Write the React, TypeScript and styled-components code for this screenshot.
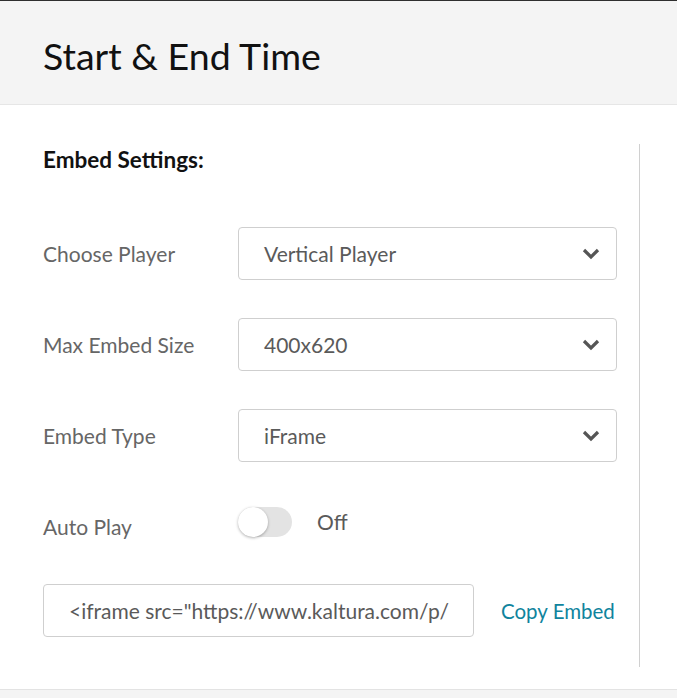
import React from "react";
import styled, { createGlobalStyle } from "styled-components";

const Global = createGlobalStyle`
  html, body { margin: 0; padding: 0; background: #f4f4f4; }
  body { font-family: Lato, "Open Sans", sans-serif; }
  * { box-sizing: border-box; }
`;

const Page = styled.div`
  width: 677px;
  height: 698px;
  display: flex;
  flex-direction: column;
  border-top: 1px solid #2f2f2f;
  background: #f4f4f4;
  overflow: hidden;
`;

const Header = styled.header`
  height: 104px;
  flex-shrink: 0;
  display: flex;
  align-items: center;
  padding: 5px 43px 0;
  border-bottom: 1px solid #e6e6e6;
`;

const Title = styled.h1`
  margin: 0;
  font-family: "Source Sans Pro", Lato, sans-serif;
  font-weight: 400;
  font-size: 37.5px;
  color: #111;
`;

const Body = styled.main`
  height: 585px;
  flex-shrink: 0;
  background: #fff;
  border-bottom: 1px solid #e3e3e3;
  display: flex;
  padding: 0 0 0 43px;
`;

const Content = styled.section`
  width: 574px;
  flex-shrink: 0;
  padding-top: 44px;
  display: flex;
  flex-direction: column;
`;

const Divider = styled.div`
  width: 1px;
  background: #d0d0d0;
  margin: 39px 0 22px 22px;
`;

const SectionTitle = styled.h2`
  margin: 0 0 56px;
  font-size: 22.5px;
  line-height: 22px;
  font-weight: 700;
  color: #111;
`;

const Row = styled.div<{ $gap?: number }>`
  display: flex;
  align-items: center;
  height: 53px;
  margin-bottom: ${(p) => p.$gap ?? 38}px;
`;

const Label = styled.label`
  width: 195px;
  flex-shrink: 0;
  font-size: 21px;
  color: #666;
`;

const SelectBox = styled.div`
  width: 379px;
  height: 53px;
  border: 1px solid #cfcfcf;
  border-radius: 4px;
  display: flex;
  align-items: center;
  justify-content: space-between;
  padding: 0 16px 0 25px;
  font-size: 21px;
  color: #5a5a5a;
`;

const ToggleWrap = styled.div`
  display: flex;
  align-items: center;
  gap: 25px;
  margin-top: -10px;
`;

const Track = styled.div`
  width: 54px;
  height: 30px;
  border-radius: 15px;
  background: #e3e3e3;
  position: relative;
`;

const Knob = styled.div`
  position: absolute;
  left: 0;
  top: 0;
  width: 30px;
  height: 30px;
  border-radius: 50%;
  background: #fff;
  box-shadow: 0 1px 3px rgba(0, 0, 0, 0.3);
`;

const ToggleText = styled.span`
  font-size: 21px;
  color: #5a5a5a;
`;

const EmbedRow = styled.div`
  display: flex;
  align-items: center;
  height: 53px;
  margin-top: 1px;
`;

const EmbedInput = styled.div`
  width: 431px;
  flex-shrink: 0;
  height: 53px;
  border: 1px solid #cfcfcf;
  border-radius: 4px;
  display: flex;
  align-items: center;
  padding: 0 24px 0 25px;
  font-size: 21px;
  color: #5a5a5a;
`;

const EmbedText = styled.span`
  display: block;
  width: 100%;
  overflow: hidden;
  white-space: nowrap;
`;

const CopyLink = styled.a`
  margin-left: 27px;
  font-size: 20.5px;
  color: #0f849d;
  text-decoration: none;
  white-space: nowrap;
  cursor: pointer;
`;

const Chevron = () => (
  <svg width="18" height="12" viewBox="0 0 18 12">
    <polyline points="2,2 9,9 16,2" fill="none" stroke="#555" strokeWidth="3.2" />
  </svg>
);

const Select = ({ value }: { value: string }) => (
  <SelectBox>
    <span>{value}</span>
    <Chevron />
  </SelectBox>
);

export default function App() {
  return (
    <Page>
      <Global />
      <Header>
        <Title>Start &amp; End Time</Title>
      </Header>
      <Body>
        <Content>
          <SectionTitle>Embed Settings:</SectionTitle>
          <Row>
            <Label>Choose Player</Label>
            <Select value="Vertical Player" />
          </Row>
          <Row>
            <Label>Max Embed Size</Label>
            <Select value="400x620" />
          </Row>
          <Row>
            <Label>Embed Type</Label>
            <Select value="iFrame" />
          </Row>
          <Row $gap={30}>
            <Label>Auto Play</Label>
            <ToggleWrap>
              <Track>
                <Knob />
              </Track>
              <ToggleText>Off</ToggleText>
            </ToggleWrap>
          </Row>
          <EmbedRow>
            <EmbedInput>
              <EmbedText>&lt;iframe src="https://www.kaltura.com/p/2</EmbedText>
            </EmbedInput>
            <CopyLink>Copy Embed</CopyLink>
          </EmbedRow>
        </Content>
        <Divider />
      </Body>
    </Page>
  );
}
